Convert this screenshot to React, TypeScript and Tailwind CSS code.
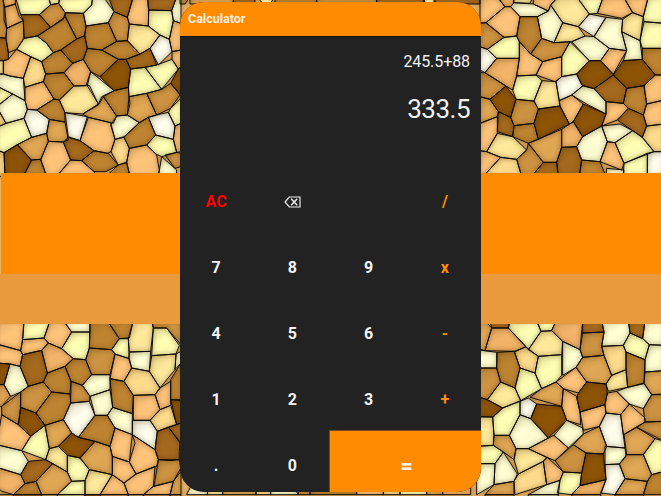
import React from "react";

const tones: Record<string, string> = {
  a: "#8d5406", b: "#a5691d", c: "#be8431", d: "#cd9342", e: "#e0a754", f: "#f2b468",
  g: "#ffc47a", h: "#ffdc8c", i: "#ffe99a", j: "#ffffb4", k: "#ffffd2", l: "#fffeec",
};

// Each line is a stone: its tone, then its corners, in thirds of a pixel.
const topLeft = `j 46,0 62,44 118,44 152,14 145,0
f 12,22 46,12 58,50 70,62 20,85 12,60
d 0,0 8,0 14,22 20,85 18,115 0,112
f 8,0 46,0 46,12 12,22
e 20,85 70,62 72,115 50,148 25,158 18,115
b 0,112 18,115 25,158 25,178 10,182 0,180
i 0,182 10,182 10,222 0,222
b 62,44 118,44 152,82 112,108 72,115 70,62
d 118,44 152,14 176,10 196,38 190,58 152,82
j 145,0 152,14 176,10 180,0
j 180,0 176,10 196,38 250,40 275,15 278,0
c 112,108 152,82 196,50 230,117 182,150 160,158 140,130
c 196,38 250,40 258,78 254,107 230,117 196,50
j 50,148 72,115 112,108 140,130 160,158 125,185 92,170
k 278,0 310,0 342,35 325,68 258,78 250,40 275,15
b 325,0 342,35 382,52 400,0
d 342,35 382,52 388,72 382,122 350,124 325,68
g 400,0 442,0 446,30 445,78 388,72 382,52
b 442,0 446,30 515,32 530,0
j 446,30 515,32 520,62 508,118 480,105 445,78
i 388,72 445,78 480,105 450,145 420,162 382,122
l 480,105 508,118 516,155 475,195 450,145
g 520,62 543,70 543,150 516,155 508,118
k 530,0 515,32 520,62 543,70 543,0
c 258,78 325,68 350,124 305,150 262,145 254,107
b 230,117 254,107 262,145 250,178 218,190 182,150
c 182,150 218,190 192,218 137,222 125,185 160,158
c 305,150 350,124 382,122 420,162 378,178 355,178
c 262,145 305,150 355,178 300,230 272,215 250,178
a 355,178 378,178 392,207 385,262 342,272 300,230
b 378,178 420,162 450,145 470,195 435,202 392,207
f 250,178 272,215 258,257 222,258 192,218 218,190
g 50,148 92,170 70,235 30,228 10,222 10,182 25,178
h 92,170 125,185 137,222 130,245 75,262 70,235
c 137,222 192,218 222,258 178,300 162,297 130,245
g 75,262 130,245 162,297 110,330 82,328 75,302
k 0,222 10,222 30,228 70,235 75,302 38,282 0,258
j 0,258 38,282 0,320
k 38,282 75,302 82,328 72,355 18,370 0,320
h 0,320 18,370 0,382
i 222,258 258,257 268,256 295,312 248,342 195,338 178,300
k 272,215 342,272 305,290 295,312 262,257
c 342,272 385,262 387,290 390,310 382,345 350,348 310,290
e 310,290 350,348 340,370 265,352 248,342 295,315
j 392,207 435,202 485,268 440,280 387,290 385,262
j 435,202 470,195 516,178 535,207 485,268
g 516,178 516,155 543,150 543,200 535,207
d 485,268 512,250 540,285 512,325 470,345 440,280
a 535,207 543,200 543,285 512,250
e 387,290 440,280 470,345 445,352 418,368 382,345
c 162,297 178,300 195,338 195,366 148,358 110,330
l 82,328 110,330 148,358 140,400 95,412 72,355
e 148,358 195,366 205,420 190,426 145,424 140,400
l 195,338 262,350 240,422 205,410
g 265,352 332,368 345,418 333,455 322,460 282,452 240,422
k 350,348 382,345 418,368 372,410 345,418 332,375
c 418,368 445,352 467,405 440,435 388,445 372,412
l 445,352 470,345 505,337 525,378 520,418 467,405
j 512,325 543,295 543,370 525,378 505,337
j 0,382 18,370 72,355 95,412 52,434 12,458 0,450
e 52,434 95,412 140,400 145,424 122,478 95,480
a 12,458 52,434 95,480 70,519 15,519
h 0,450 12,458 15,519 0,519
c 95,480 122,478 140,519 70,519
g 145,424 190,426 212,480 170,519 140,519 122,480
b 190,426 205,412 240,422 282,452 245,482 212,480
g 212,480 245,482 282,515 290,519 170,519
c 245,482 282,452 325,460 355,495 318,515 282,515
h 345,418 372,412 388,445 380,487 355,495 333,455
g 388,445 440,435 470,465 478,510 475,519 390,519 380,487
j 440,435 467,405 520,418 530,457 485,470 468,462
c 355,495 380,487 390,519 318,519
k 485,470 530,510 530,519 475,519
d 495,465 530,457 543,460 543,500 525,505
g 520,418 525,378 543,370 543,455 530,457`;

const topRight = `g 0,0 50,0 75,20 18,68 0,68
f 52,0 102,0 100,10 92,20 75,20
i 102,0 160,0 150,10 102,8
g 18,68 75,20 92,20 120,50 110,108 72,112
k 92,20 102,8 160,12 205,33 172,50 120,50
g 160,0 235,0 212,15 205,33 160,12
i 235,0 290,0 328,42 295,80 248,68 212,15
j 290,0 370,0 352,40 328,42
g 370,0 430,0 458,38 425,55 352,40
g 430,0 505,0 490,50 458,38
j 505,0 543,0 543,70 492,65 490,50
k 205,33 212,15 248,68 222,128 185,115 172,50
c 120,50 172,50 185,115 152,162 118,125 110,108
i 248,68 295,80 315,108 275,125 222,128
l 328,42 378,52 342,110 295,80
k 378,52 428,58 425,95 440,152 388,145 342,110
i 458,38 490,50 480,122 425,95 428,58
j 492,65 543,70 543,145 487,145 480,122
k 425,95 480,122 487,178 430,182 440,152
d 0,70 18,68 72,112 22,148 0,140
j 22,148 72,112 110,108 118,125 118,175 50,175
l 0,140 22,148 50,175 15,218 0,210
g 118,125 152,162 188,185 168,225 110,228 118,175
d 185,115 222,128 270,125 245,170 188,185 152,162
k 275,125 315,108 342,110 388,145 362,182 328,182
j 270,125 328,182 290,222 245,230 245,170
g 388,145 440,152 400,222 362,182
g 245,170 245,230 225,245 168,225 188,185
f 15,218 50,175 118,175 110,228 98,270 78,258
a 328,182 362,182 400,225 342,266 305,255 290,222
a 430,182 487,178 526,225 492,257 440,265 400,225
c 487,145 543,145 543,225 526,225 487,178
b 400,225 440,265 430,310 378,305 342,266
j 110,228 168,225 186,242 162,303 108,298 98,270
i 186,242 228,245 240,318 175,327 162,303
l 228,245 245,230 290,222 308,258 275,285 238,302
k 308,258 342,266 378,305 378,342 320,312 275,285
c 440,265 492,257 500,312 490,345 445,325 430,310
g 492,257 526,225 543,225 543,300 500,312
d 0,218 15,218 78,258 30,298 0,290
a 30,298 78,258 108,298 92,352 55,335
e 0,290 30,298 55,335 52,350 0,370
d 108,298 162,303 175,327 162,370 102,377 92,352
g 238,302 275,285 310,312 280,365 268,372 240,318
a 175,327 240,318 268,372 175,418 162,370
a 310,312 378,342 365,378 308,410 280,365
g 378,305 430,310 445,325 412,360 365,378 378,342
b 445,325 490,345 500,378 487,412 458,392 412,360
g 500,312 543,300 543,372 500,378 490,345
b 55,335 92,352 102,377 98,410 52,395
g 0,370 52,350 52,400 20,455 0,452
c 102,377 162,370 175,418 145,430 98,410
i 52,400 98,410 140,450 110,478 62,472 20,455
k 365,378 420,372 458,392 405,428 382,425
k 308,410 365,378 382,425 360,485 305,480 290,440
j 458,392 487,412 522,455 432,490 405,428
h 500,378 543,372 543,455 522,455 487,412
f 245,388 280,365 308,410 290,440 245,442
e 145,430 245,388 245,442 230,487 190,487
d 145,430 190,487 155,519 125,519 110,478 140,450
b 245,442 290,440 305,480 298,519 235,519 230,487
g 382,425 405,428 432,490 425,510 360,485
c 305,480 360,485 378,519 298,519
b 190,487 230,487 235,519 155,519
j 432,490 502,460 502,519 430,519
l 502,460 522,455 543,455 543,519 502,519
g 0,452 20,455 62,472 10,519 0,519
h 62,472 110,478 125,519 10,519
k 378,519 380,505 432,510 430,519`;

const bottomLeft = `g 0,18 72,18 68,65 62,98 0,78
j 72,18 150,18 132,60 68,65
g 150,18 190,18 215,42 185,92 145,75 132,60
k 190,18 270,18 270,42 215,42
j 215,42 270,42 268,90 257,125 220,122 185,92
c 270,18 322,18 358,62 335,95 268,90
c 322,18 400,18 388,60 358,62
i 400,18 455,18 460,30 452,100 388,102 385,62
j 460,30 500,30 538,82 528,108 455,113
d 455,18 543,18 543,80 500,30 460,30
j 358,62 385,62 388,122 345,108 335,95
k 388,102 452,100 448,160 395,150 386,122
i 455,113 528,108 525,155 480,210 448,160
g 62,98 68,65 132,60 145,75 125,97 68,110
g 0,78 62,98 68,110 60,145 30,138 0,135
b 68,110 125,97 142,165 130,192 85,205 60,145
a 0,135 30,138 12,200 0,200
k 30,138 60,145 85,205 62,222 32,235 12,200
f 125,97 145,75 185,92 220,122 195,145 142,165
c 195,145 220,122 257,125 275,170 247,202 213,190
d 268,90 335,95 345,108 330,170 275,170 257,125
g 345,108 388,122 395,150 372,190 330,182
h 395,150 448,160 480,210 465,230 400,232 372,190
c 130,192 142,165 195,145 213,190 210,228 155,222
d 62,222 85,205 130,192 155,222 108,285 62,268
c 108,285 155,222 210,228 212,255 190,305 135,322
k 247,202 275,170 330,170 330,215 270,235
k 270,235 330,215 338,268 322,292 285,292
d 213,190 247,202 270,235 268,250 212,255
l 212,255 268,250 285,292 235,358 215,345 190,305
c 330,182 372,190 400,232 397,287 338,268
g 400,232 465,230 480,275 450,307 400,307
g 465,230 480,210 512,190 512,262 480,275
h 480,275 512,262 530,320 472,340 450,307
c 512,185 543,135 543,245 512,245
k 528,108 543,100 543,135 525,155
a 512,245 543,248 543,315 530,320
e 0,200 12,200 32,235 5,265 0,265
d 5,265 62,222 62,268 55,320 5,290
a 62,268 108,285 135,322 92,355 55,320
g 5,290 55,320 92,355 65,398 0,380
j 135,322 148,392 137,425 65,398 92,355
e 135,322 190,305 215,345 175,385 148,392
a 175,385 215,345 235,358 285,370 240,420 202,412
c 285,292 322,292 345,330 330,385 285,370 235,358
k 322,292 338,268 397,287 397,350 345,330
l 397,307 450,307 472,340 465,395 397,350
g 345,330 397,350 405,375 388,432 337,415 330,385
g 397,350 465,395 475,425 470,445 408,468 388,432
b 472,340 505,327 540,375 538,400 538,425 510,428 475,425 465,395
b 505,327 543,315 543,375
d 475,425 538,425 543,460 520,490 462,505
i 148,392 175,385 202,412 202,462 155,435 137,425
j 202,412 240,420 268,455 255,488 215,490 202,462
e 240,420 285,370 330,385 337,415 337,470 268,455
k 0,380 65,398 85,430 62,470 0,448
b 85,430 137,425 158,437 108,490 75,497 62,470
e 108,490 158,437 202,462 215,490 172,530 125,530
i 268,455 337,470 300,530 255,530 255,488
j 215,490 255,488 255,530 172,530
f 0,448 62,470 75,497 40,530 5,520 0,505
c 40,530 75,497 108,490 125,530
g 337,415 388,432 408,468 372,495 337,470
g 300,530 337,470 372,495 385,530
g 372,495 408,468 465,445 460,505 430,530 385,530
g 430,530 460,505 520,490 510,530
e 510,530 520,490 543,450 543,530`;

const bottomRight = `e 0,18 15,18 35,30 15,98 0,90
b 30,18 90,18 85,30 35,30
f 35,30 85,30 138,85 108,100 15,98
j 90,18 170,18 183,40 145,95 85,30
j 170,18 228,18 215,38 183,40
f 228,18 308,18 300,95 248,70 215,38
b 308,18 365,18 372,42 308,45
k 365,18 445,18 450,45 430,82 365,85 372,42
b 445,18 495,18 488,62 450,45
k 495,18 543,18 543,82 508,80 488,62
d 308,45 372,42 365,85 372,112 308,118 300,95
i 183,40 215,38 248,70 245,110 175,115 145,95
k 248,70 300,95 308,118 288,148 248,172
h 103,100 138,87 175,115 165,165 120,150
k 0,95 50,103 50,150 0,150
c 52,103 103,100 120,150 105,210 62,192 50,150
j 175,115 245,110 245,172 228,192 185,212 165,165
e 308,118 372,112 395,172 378,198 320,192 288,148
h 365,85 430,82 438,102 438,155 395,172 372,112
j 430,82 450,45 488,62 508,80 495,125 438,102
k 508,80 543,82 543,158 495,162 495,125
c 438,102 495,125 492,195 443,208 438,155
i 395,172 438,155 443,208 385,220 378,198
g 228,192 288,148 320,192 295,225 250,212
d 0,150 50,150 62,192 22,245 0,235
i 62,192 105,210 122,248 68,270 22,245
j 120,150 165,165 185,212 122,248 105,210
e 185,212 228,192 250,212 245,265 150,238
a 295,225 320,192 378,198 382,225 375,260 300,282 290,240
g 382,225 410,220 448,258 422,290 378,285 375,260
k 410,220 443,208 492,197 515,230 490,272 448,258
e 492,195 495,162 543,158 543,228 515,230
d 515,230 543,230 543,310 495,312 490,272
a 0,235 22,245 68,270 40,297 0,295
g 250,212 290,235 300,282 302,320 260,307 245,265
j 68,270 120,250 120,290 88,352 42,352 38,297
l 120,250 145,240 170,258 152,302 120,290
a 170,258 245,265 260,307 205,360 152,302
g 300,282 375,260 378,285 358,325 310,337
l 378,285 422,290 435,390 380,385 358,325
g 422,290 448,258 495,300 495,312 430,350
k 120,290 152,302 205,360 145,392 108,392 88,352
k 260,307 308,330 310,348 265,390 222,352
i 0,297 38,297 42,352 40,382 0,385
e 42,352 88,352 108,392 102,425 70,402 40,382
g 145,392 205,360 222,352 265,390 225,428 200,418
e 310,348 358,325 380,385 370,408 318,405 280,380
d 470,328 495,312 543,310 543,370
e 432,350 470,328 525,362 490,410 440,410
j 525,362 543,370 543,460 515,470 490,410
j 0,385 40,382 70,402 45,437 0,437
k 45,437 70,402 112,468 102,490 42,500
i 108,392 145,392 200,418 190,430 115,468 102,425
h 115,468 190,430 200,500 105,530 102,490
g 190,430 202,418 250,462 240,487 200,500
d 225,428 280,380 318,405 305,465 250,462
a 318,405 370,408 378,485 300,503 305,465
k 375,385 435,390 438,415 418,438 375,440
e 440,410 490,410 515,470 502,490 435,482 418,438
l 375,440 418,438 435,482 405,530 362,525 378,485
k 0,437 45,437 42,500 0,530
e 15,530 42,500 102,490 102,530
k 145,530 200,500 240,487 235,530
j 250,462 305,465 300,503 275,530 232,525 240,487
f 275,530 300,503 378,485 362,530
e 405,530 435,482 502,490 490,530
c 490,530 502,490 515,470 543,460 543,530`;

const topEdge = `d 540,0 570,0 555,12 540,12
e 570,0 700,0 700,12 570,12
b 700,0 765,0 765,12 700,12
j 770,0 825,0 810,12 790,12
c 825,0 950,0 950,12 825,12
d 950,0 1130,0 1130,12 950,12
b 1130,0 1270,0 1270,12 1130,12
j 1272,0 1305,0 1300,12 1275,12
b 1305,0 1440,0 1440,12 1305,12`;

// The lowest course runs off the bottom of the page.
const bottomEdge = `g 0,1484 40,1484 40,1488 0,1488
c 40,1484 125,1484 125,1488 40,1488
h 125,1484 172,1484 172,1488 125,1488
j 172,1484 255,1484 255,1488 172,1488
b 255,1484 300,1484 300,1488 255,1488
g 300,1484 385,1484 385,1488 300,1488
h 385,1484 430,1484 430,1488 385,1488
g 430,1484 510,1484 510,1488 430,1488
e 510,1484 543,1484 543,1488 510,1488
k 560,1484 572,1460 624,1460 622,1484
i 622,1460 668,1460 668,1484 622,1484
e 668,1460 768,1460 768,1484 668,1484
h 768,1460 812,1460 812,1484 768,1484
k 812,1460 880,1460 895,1484 812,1484
d 895,1460 930,1460 930,1484 895,1484
c 930,1460 1070,1460 1070,1484 930,1484
g 1070,1460 1150,1460 1150,1484 1070,1484
h 1150,1460 1200,1460 1200,1484 1150,1484
j 1200,1460 1280,1460 1280,1484 1200,1484
e 1280,1460 1328,1460 1328,1484 1280,1484
f 1328,1460 1412,1460 1412,1484 1328,1484
e 1455,1484 1542,1484 1542,1488 1455,1488
k 1585,1484 1675,1484 1675,1488 1585,1488
g 1715,1484 1802,1484 1802,1488 1715,1488
e 1845,1484 1930,1484 1930,1488 1845,1488`;

// Corners on the outer rim are pushed outward so that no outline is drawn along it.
function parse(source: string, top: number, bottom: number, left: number, right: number) {
  return source.split("\n").map((line) => ({
    fill: tones[line[0]],
    points: line
      .slice(2)
      .split(" ")
      .map((pair) => {
        const [x, y] = pair.split(",").map(Number);
        const px = x <= left ? x - 10 : x >= right ? x + 10 : x;
        const py = y <= top ? y - 10 : y >= bottom ? y + 10 : y;
        return `${px},${py}`;
      })
      .join(" "),
  }));
}

const patches = [
  { x: 0, y: 0, stones: parse(topEdge, 0, 9999, -1, 9999) },
  { x: 0, y: 0, stones: parse(bottomEdge, -1, 1488, 0, 9999) },
  { x: 0, y: 0, stones: parse(topLeft, 0, 519, 0, 9999) },
  { x: 1440, y: 0, stones: parse(topRight, 0, 519, -1, 543) },
  { x: 0, y: 954, stones: parse(bottomLeft, 18, 9999, 0, 9999) },
  { x: 1440, y: 954, stones: parse(bottomRight, 18, 9999, 0, 543) },
];

function Mosaic() {
  return (
    <svg className="absolute inset-0 h-full w-full" viewBox="0 0 1983 1488" preserveAspectRatio="none" aria-hidden="true">
      <defs>
        <filter id="soften" x="0" y="0" width="1" height="1"><feGaussianBlur stdDeviation="6" /></filter>
        <linearGradient id="sheen" x1="0.2" y1="0" x2="0.7" y2="1">
          <stop offset="0" stopColor="#4a2b00" stopOpacity="0.14" />
          <stop offset="0.45" stopColor="#4a2b00" stopOpacity="0" />
          <stop offset="1" stopColor="#4a2b00" stopOpacity="0.03" />
        </linearGradient>
      </defs>
      <rect width="1983" height="1488" fill="#eab469" />
      {patches.map((p, n) => (
        <g key={n} transform={`translate(${p.x} ${p.y})`}>
          {p.stones.map((s, i) => <polygon key={i} points={s.points} fill={s.fill} />)}
          {p.stones.map((s, i) => <polygon key={i} points={s.points} fill="url(#sheen)" />)}
        </g>
      ))}
      <g fill="none" stroke="#382000" strokeWidth="8" opacity="0.3" filter="url(#soften)">
        {patches.map((p, n) => (
          <g key={n} transform={`translate(${p.x} ${p.y})`}>
            {p.stones.map((s, i) => <polygon key={i} points={s.points} />)}
          </g>
        ))}
      </g>
      <g fill="none" stroke="#080400" strokeWidth="2.8" strokeLinejoin="round">
        {patches.map((p, n) => (
          <g key={n} transform={`translate(${p.x} ${p.y})`}>
            {p.stones.map((s, i) => <polygon key={i} points={s.points} />)}
          </g>
        ))}
      </g>
    </svg>
  );
}

function Backspace() {
  return (
    <svg className="h-3 w-[17px]" viewBox="0 0 17 12" fill="none" stroke="#ececec" strokeWidth="1.2">
      <path d="M5.3 1H16v10H5.3L1 6z" />
      <path d="M7.2 2.7l6 6.6M13.2 2.7l-6 6.6" strokeWidth="1.5" />
    </svg>
  );
}

const keys: { label: React.ReactNode; tone: string }[] = [
  { label: "AC", tone: "text-[#ff0000]" },
  { label: <Backspace />, tone: "text-[#f2f2f2]" },
  { label: "", tone: "text-[#f2f2f2]" },
  { label: "/", tone: "text-[#ff8c00]" },
  { label: "7", tone: "text-[#f2f2f2]" },
  { label: "8", tone: "text-[#f2f2f2]" },
  { label: "9", tone: "text-[#f2f2f2]" },
  { label: "x", tone: "text-[#ff8c00]" },
  { label: "4", tone: "text-[#f2f2f2]" },
  { label: "5", tone: "text-[#f2f2f2]" },
  { label: "6", tone: "text-[#f2f2f2]" },
  { label: "-", tone: "text-[#ff8c00]" },
  { label: "1", tone: "text-[#f2f2f2]" },
  { label: "2", tone: "text-[#f2f2f2]" },
  { label: "3", tone: "text-[#f2f2f2]" },
  { label: "+", tone: "text-[#ff8c00]" },
  { label: ".", tone: "text-[#f2f2f2]" },
  { label: "0", tone: "text-[#f2f2f2]" },
];

export default function App() {
  return (
    <div className="relative h-[496px] w-[661px] overflow-hidden font-['Roboto',sans-serif]">
      <Mosaic />
      <div className="absolute inset-x-0 top-[173px] flex flex-col">
        <div className="ml-px h-[101px] bg-[#ff8c00]" />
        <div className="h-[50px] bg-[#e89a3c]" />
      </div>
      <main className="relative mt-0.5 ml-[180px] flex h-[490px] w-[301px] flex-col overflow-hidden rounded-[24px] bg-[#222222]">
        <header className="flex h-[34px] shrink-0 items-center bg-[#ff8c00] pl-2 text-[12.5px] font-bold text-[#fff0e0]">Calculator</header>
        <section className="flex h-[132px] shrink-0 flex-col items-end border-t border-[#111111] pr-[11px] text-[#f2f2f2]">
          <div className="mt-[13px] text-base leading-6 tracking-[-0.08px]">245.5+88</div>
          <div className="mt-[19px] text-[26px] leading-8 tracking-[-0.5px]">333.5</div>
        </section>
        <section className="-mx-0.5 grid shrink-0 auto-rows-[66px] grid-cols-4 pt-px text-base font-bold">
          {keys.map((k, i) => (
            <button key={i} className={`flex items-center justify-center ${k.tone}`}>{k.label}</button>
          ))}
          <button className="col-span-2 -mt-[3px] -ml-[1.5px] flex items-center justify-center border-t border-l border-[#7a4a10] bg-[#ff8c00] text-[22px] font-bold text-[#fff4e8]">=</button>
        </section>
      </main>
    </div>
  );
}
